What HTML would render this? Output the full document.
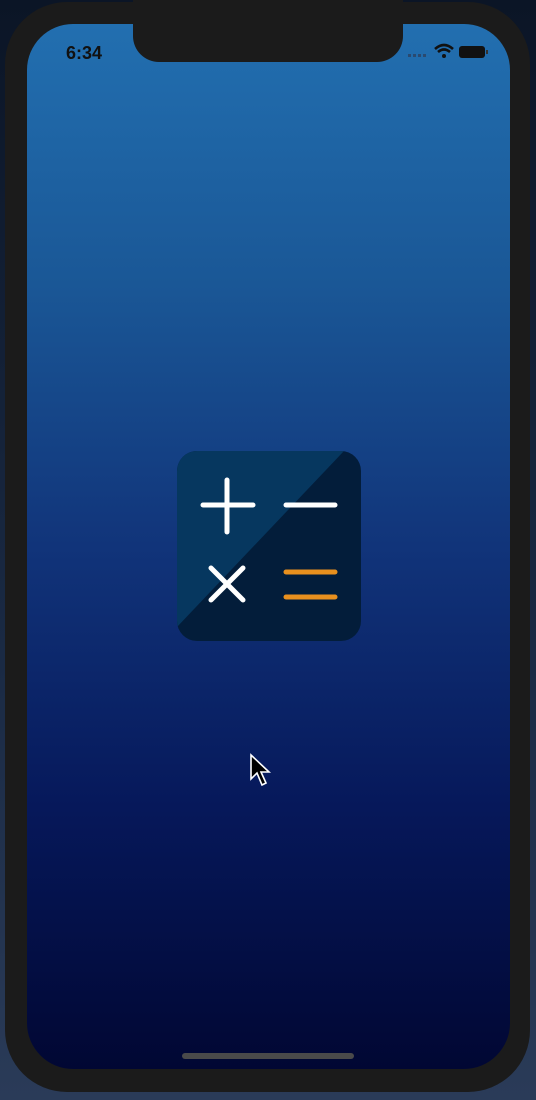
<!DOCTYPE html>
<html><head><style>
body{margin:0;width:536px;height:1100px;background:linear-gradient(#0b1526,#1a2a44 60%,#2a3b58);position:relative;overflow:hidden;font-family:"Liberation Sans",sans-serif}
.frame{position:absolute;left:5px;top:2px;width:525px;height:1090px;background:#1b1b1b;border-radius:62px}
.screen{position:absolute;left:27px;top:24px;width:483px;height:1045px;border-radius:46px;background:linear-gradient(#226fb0 0%,#1a5796 25%,#11347a 50%,#06185a 75%,#010733 100%);overflow:hidden}
.notch{position:absolute;left:133px;top:0;width:270px;height:62px;background:#1b1b1b;border-radius:0 0 26px 26px}
.time{position:absolute;left:66px;top:43px;font-size:18px;font-weight:bold;color:#111}
.home{position:absolute;left:182px;top:1053px;width:172px;height:6px;border-radius:3px;background:#4a4a4a}
</style></head><body>
<div class="frame"></div>
<div class="screen"></div>
<div class="notch"></div>
<div class="time">6:34</div>
<svg style="position:absolute;left:395px;top:40px" width="100" height="24">
<g fill="#2a4a70"><rect x="13" y="14" width="3" height="3"/><rect x="18" y="14" width="3" height="3"/><rect x="23" y="14" width="3" height="3"/><rect x="28" y="14" width="3" height="3"/></g>
<path d="M40 9 Q49 1 58 9 M43 12 Q49 7 55 12" stroke="#111" stroke-width="2.6" fill="none"/>
<circle cx="49" cy="16" r="2" fill="#111"/>
<rect x="64" y="6" width="26" height="12" rx="3" fill="#111"/>
<rect x="91" y="10" width="2" height="4" fill="#333"/>
</svg>
<svg style="position:absolute;left:177px;top:451px" width="184" height="190">
<defs><clipPath id="c"><rect width="184" height="190" rx="20"/></clipPath></defs>
<g clip-path="url(#c)">
<rect width="184" height="190" fill="#031d3a"/>
<polygon points="0,0 167,0 0,176" fill="#06375f"/>
</g>
<g stroke="#fff" stroke-width="5" stroke-linecap="round">
<line x1="26" y1="54" x2="76" y2="54"/><line x1="50" y1="29" x2="50" y2="81"/>
<line x1="109" y1="54" x2="158" y2="54"/>
<line x1="34" y1="117" x2="66" y2="149"/><line x1="66" y1="117" x2="34" y2="149"/>
</g>
<g stroke="#e8901e" stroke-width="5" stroke-linecap="round">
<line x1="109" y1="121" x2="158" y2="121"/><line x1="109" y1="146" x2="158" y2="146"/>
</g>
</svg>
<svg style="position:absolute;left:249px;top:753px" width="24" height="36"><path d="M2 2 L2 26 L8 20 L13 32 L17 30 L12 19 L20 19 Z" fill="#000" stroke="#fff" stroke-width="1.6"/></svg>
<div class="home"></div>
</body></html>
